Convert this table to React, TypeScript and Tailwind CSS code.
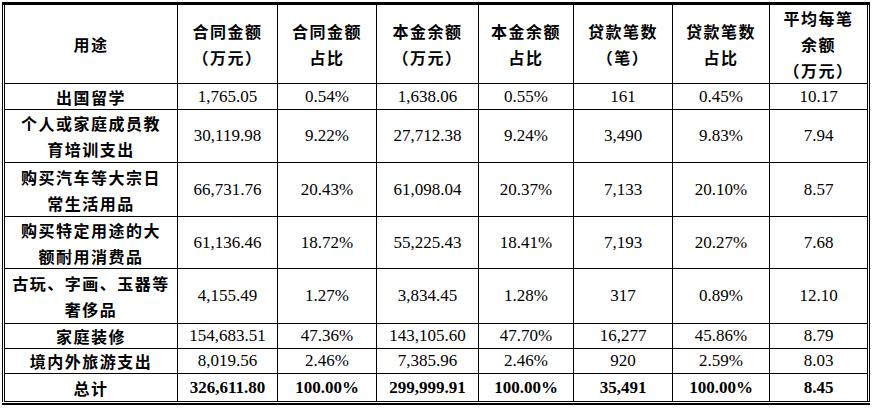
import React from "react";

const cjk = "font-['Noto_Sans_CJK_SC',sans-serif] font-bold tracking-[1.5px] text-[16px] leading-[26px]";
const num = "font-['Liberation_Serif',serif] text-[17px]";

type Row = { label: React.ReactNode; vals: string[]; total?: boolean };

const rows: Row[] = [
  { label: "出国留学", vals: ["1,765.05", "0.54%", "1,638.06", "0.55%", "161", "0.45%", "10.17"] },
  { label: <>个人或家庭成员教<br />育培训支出</>, vals: ["30,119.98", "9.22%", "27,712.38", "9.24%", "3,490", "9.83%", "7.94"] },
  { label: <>购买汽车等大宗日<br />常生活用品</>, vals: ["66,731.76", "20.43%", "61,098.04", "20.37%", "7,133", "20.10%", "8.57"] },
  { label: <>购买特定用途的大<br />额耐用消费品</>, vals: ["61,136.46", "18.72%", "55,225.43", "18.41%", "7,193", "20.27%", "7.68"] },
  { label: <>古玩、字画、玉器等<br />奢侈品</>, vals: ["4,155.49", "1.27%", "3,834.45", "1.28%", "317", "0.89%", "12.10"] },
  { label: "家庭装修", vals: ["154,683.51", "47.36%", "143,105.60", "47.70%", "16,277", "45.86%", "8.79"] },
  { label: "境内外旅游支出", vals: ["8,019.56", "2.46%", "7,385.96", "2.46%", "920", "2.59%", "8.03"] },
  { label: "总计", vals: ["326,611.80", "100.00%", "299,999.91", "100.00%", "35,491", "100.00%", "8.45"], total: true },
];

const headers: React.ReactNode[] = [
  "用途",
  <>合同金额<br />（万元）</>,
  <>合同金额<br />占比</>,
  <>本金余额<br />（万元）</>,
  <>本金余额<br />占比</>,
  <>贷款笔数<br />（笔）</>,
  <>贷款笔数<br />占比</>,
  <>平均每笔<br />余额<br />（万元）</>,
];

export default function App() {
  const lastRow = rows.length - 1;
  return (
    <div className="w-[873px] h-[409px] bg-white pt-[2px] pl-[2px]">
      <div className="w-[868px] border-t-[3px] border-b-[2px] border-solid border-black pb-[1px]">
        <div className="border-x-[3px] border-b border-double border-black grid grid-cols-[173px_100px_99px_102px_95px_99px_97px_97px] grid-rows-[79px_26px_53px_54px_52px_55px_25px_25px_27px] text-black">
          {headers.map((h, i) => (
            <div
              key={"h" + i}
              className={`flex items-center justify-center text-center border-b border-black ${i < 7 ? "border-r" : ""} ${cjk}`}
            >
              <div>{h}</div>
            </div>
          ))}
          {rows.map((r, ri) => (
            <React.Fragment key={ri}>
              <div
                className={`flex items-center justify-center text-center border-r border-black ${ri < lastRow ? "border-b" : ""} ${cjk} leading-[25px]`}
              >
                <div>{r.label}</div>
              </div>
              {r.vals.map((v, vi) => (
                <div
                  key={vi}
                  className={`flex items-center justify-center border-black ${vi < 6 ? "border-r" : ""} ${ri < lastRow ? "border-b" : ""} ${num} ${r.total ? "font-bold" : ""}`}
                >
                  {v}
                </div>
              ))}
            </React.Fragment>
          ))}
        </div>
      </div>
    </div>
  );
}
